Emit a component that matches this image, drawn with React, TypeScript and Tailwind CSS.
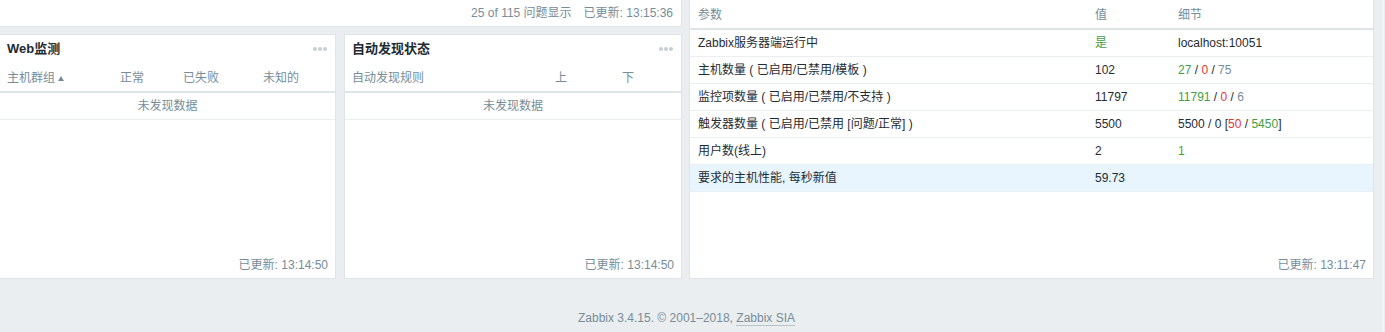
import React from "react";

const font = "font-['Liberation_Sans','Noto_Sans_CJK_SC',sans-serif]";

function Dots() {
  return (
    <div className="flex gap-[1px]">
      <span className="w-[4px] h-[4px] rounded-full bg-[#c5cfd4]" />
      <span className="w-[4px] h-[4px] rounded-full bg-[#c5cfd4]" />
      <span className="w-[4px] h-[4px] rounded-full bg-[#c5cfd4]" />
    </div>
  );
}

function Widget({ title, width, cols, updated }: { title: string; width: string; cols: { label: React.ReactNode; w: string }[]; updated: string }) {
  return (
    <div className={`${width} bg-white border border-[#dfe4e7] flex flex-col`}>
      <div className="h-[27px] pl-[7px] pr-[8px] flex items-center justify-between">
        <h4 className="text-[13px] font-bold text-[#1f2c33] leading-[16px]">{title}</h4>
        <Dots />
      </div>
      <div className="h-[31px] pl-[7px] pr-[8px] pt-[9px] flex border-b-2 border-[#dfe4e7] text-[#768d99] leading-[14px]">
        {cols.map((c, i) => (
          <div key={i} className={c.w}>{c.label}</div>
        ))}
      </div>
      <div className="h-[27px] flex items-center justify-center border-b border-[#ebeef0] text-[#768d99]">未发现数据</div>
      <div className="mt-auto pb-[6px] pr-[7px] text-right text-[#768d99] leading-[14px]">已更新: {updated}</div>
    </div>
  );
}

const G = ({ children }: { children: React.ReactNode }) => <span className="text-[#429e47]">{children}</span>;
const R = ({ children }: { children: React.ReactNode }) => <span className="text-[#e33734]">{children}</span>;
const S = ({ children }: { children: React.ReactNode }) => <span className="text-[#768d99]">{children}</span>;

const rows: { p: string; v: React.ReactNode; d: React.ReactNode; hl?: boolean }[] = [
  { p: "Zabbix服务器端运行中", v: <G>是</G>, d: "localhost:10051" },
  { p: "主机数量 ( 已启用/已禁用/模板 )", v: "102", d: <><G>27</G> / <R>0</R> / <S>75</S></> },
  { p: "监控项数量 ( 已启用/已禁用/不支持 )", v: "11797", d: <><G>11791</G> / <R>0</R> / <S>6</S></> },
  { p: "触发器数量 ( 已启用/已禁用 [问题/正常] )", v: "5500", d: <>5500 / 0 [<R>50</R> / <G>5450</G>]</> },
  { p: "用户数(线上)", v: "2", d: <G>1</G> },
  { p: "要求的主机性能, 每秒新值", v: "59.73", d: "", hl: true },
];

export default function App() {
  return (
    <div className={`${font} w-[1385px] h-[332px] bg-[#ebeef0] flex overflow-hidden text-[12px] text-[#1f2c33]`}>
      <div className="w-[1375px] -ml-px flex flex-col shrink-0">
        <div className="h-[279px] flex gap-[7px]">
          <div className="w-[683px] flex flex-col">
            <div className="h-[27px] bg-white border-x border-b border-[#dfe4e7] flex items-center justify-end gap-[12px] pr-[8px] text-[#768d99] leading-[14px]">
              <span>25 of 115 问题显示</span>
              <span>已更新: 13:15:36</span>
            </div>
            <div className="mt-[7px] flex-1 flex gap-[8px]">
              <Widget
                title="Web监测"
                width="w-[337px]"
                updated="13:14:50"
                cols={[
                  {
                    label: (
                      <span className="flex items-center gap-[3px]">
                        主机群组
                        <span className="w-0 h-0 border-x-[3px] border-x-transparent border-b-[5px] border-b-[#768d99]" />
                      </span>
                    ),
                    w: "w-[113px]",
                  },
                  { label: "正常", w: "w-[63px]" },
                  { label: "已失败", w: "w-[80px]" },
                  { label: "未知的", w: "flex-1" },
                ]}
              />
              <Widget
                title="自动发现状态"
                width="w-[338px]"
                updated="13:14:50"
                cols={[
                  { label: "自动发现规则", w: "w-[203px]" },
                  { label: "上", w: "w-[67px]" },
                  { label: "下", w: "flex-1" },
                ]}
              />
            </div>
          </div>
          <div className="w-[685px] bg-white border-x border-b border-[#dfe4e7] flex flex-col">
            <div className="h-[30px] pt-[8px] pl-[8px] flex border-b-2 border-[#dfe4e7] text-[#768d99] leading-[14px]">
              <div className="w-[397px]">参数</div>
              <div className="w-[83px]">值</div>
              <div className="flex-1">细节</div>
            </div>
            {rows.map((r, i) => (
              <div key={i} className={`h-[27px] pl-[8px] flex items-center border-b border-[#ebeef0] leading-[14px] ${r.hl ? "bg-[#e8f5ff]" : ""}`}>
                <div className="w-[397px]">{r.p}</div>
                <div className="w-[83px]">{r.v}</div>
                <div className="flex-1">{r.d}</div>
              </div>
            ))}
            <div className="mt-auto pb-[6px] pr-[7px] text-right text-[#768d99] leading-[14px]">已更新: 13:11:47</div>
          </div>
        </div>
        <div className="flex-1 pt-[32px] flex justify-center text-[#768d99] leading-[14px]">
          <span>
            Zabbix 3.4.15. © 2001–2018,{" "}
            <span className="border-b border-[#b8c3c9]">Zabbix SIA</span>
          </span>
        </div>
      </div>
      <div className="w-[8px] shrink-0" />
      <div className="w-[2px] shrink-0 bg-[#f2f4f5]" />
    </div>
  );
}
